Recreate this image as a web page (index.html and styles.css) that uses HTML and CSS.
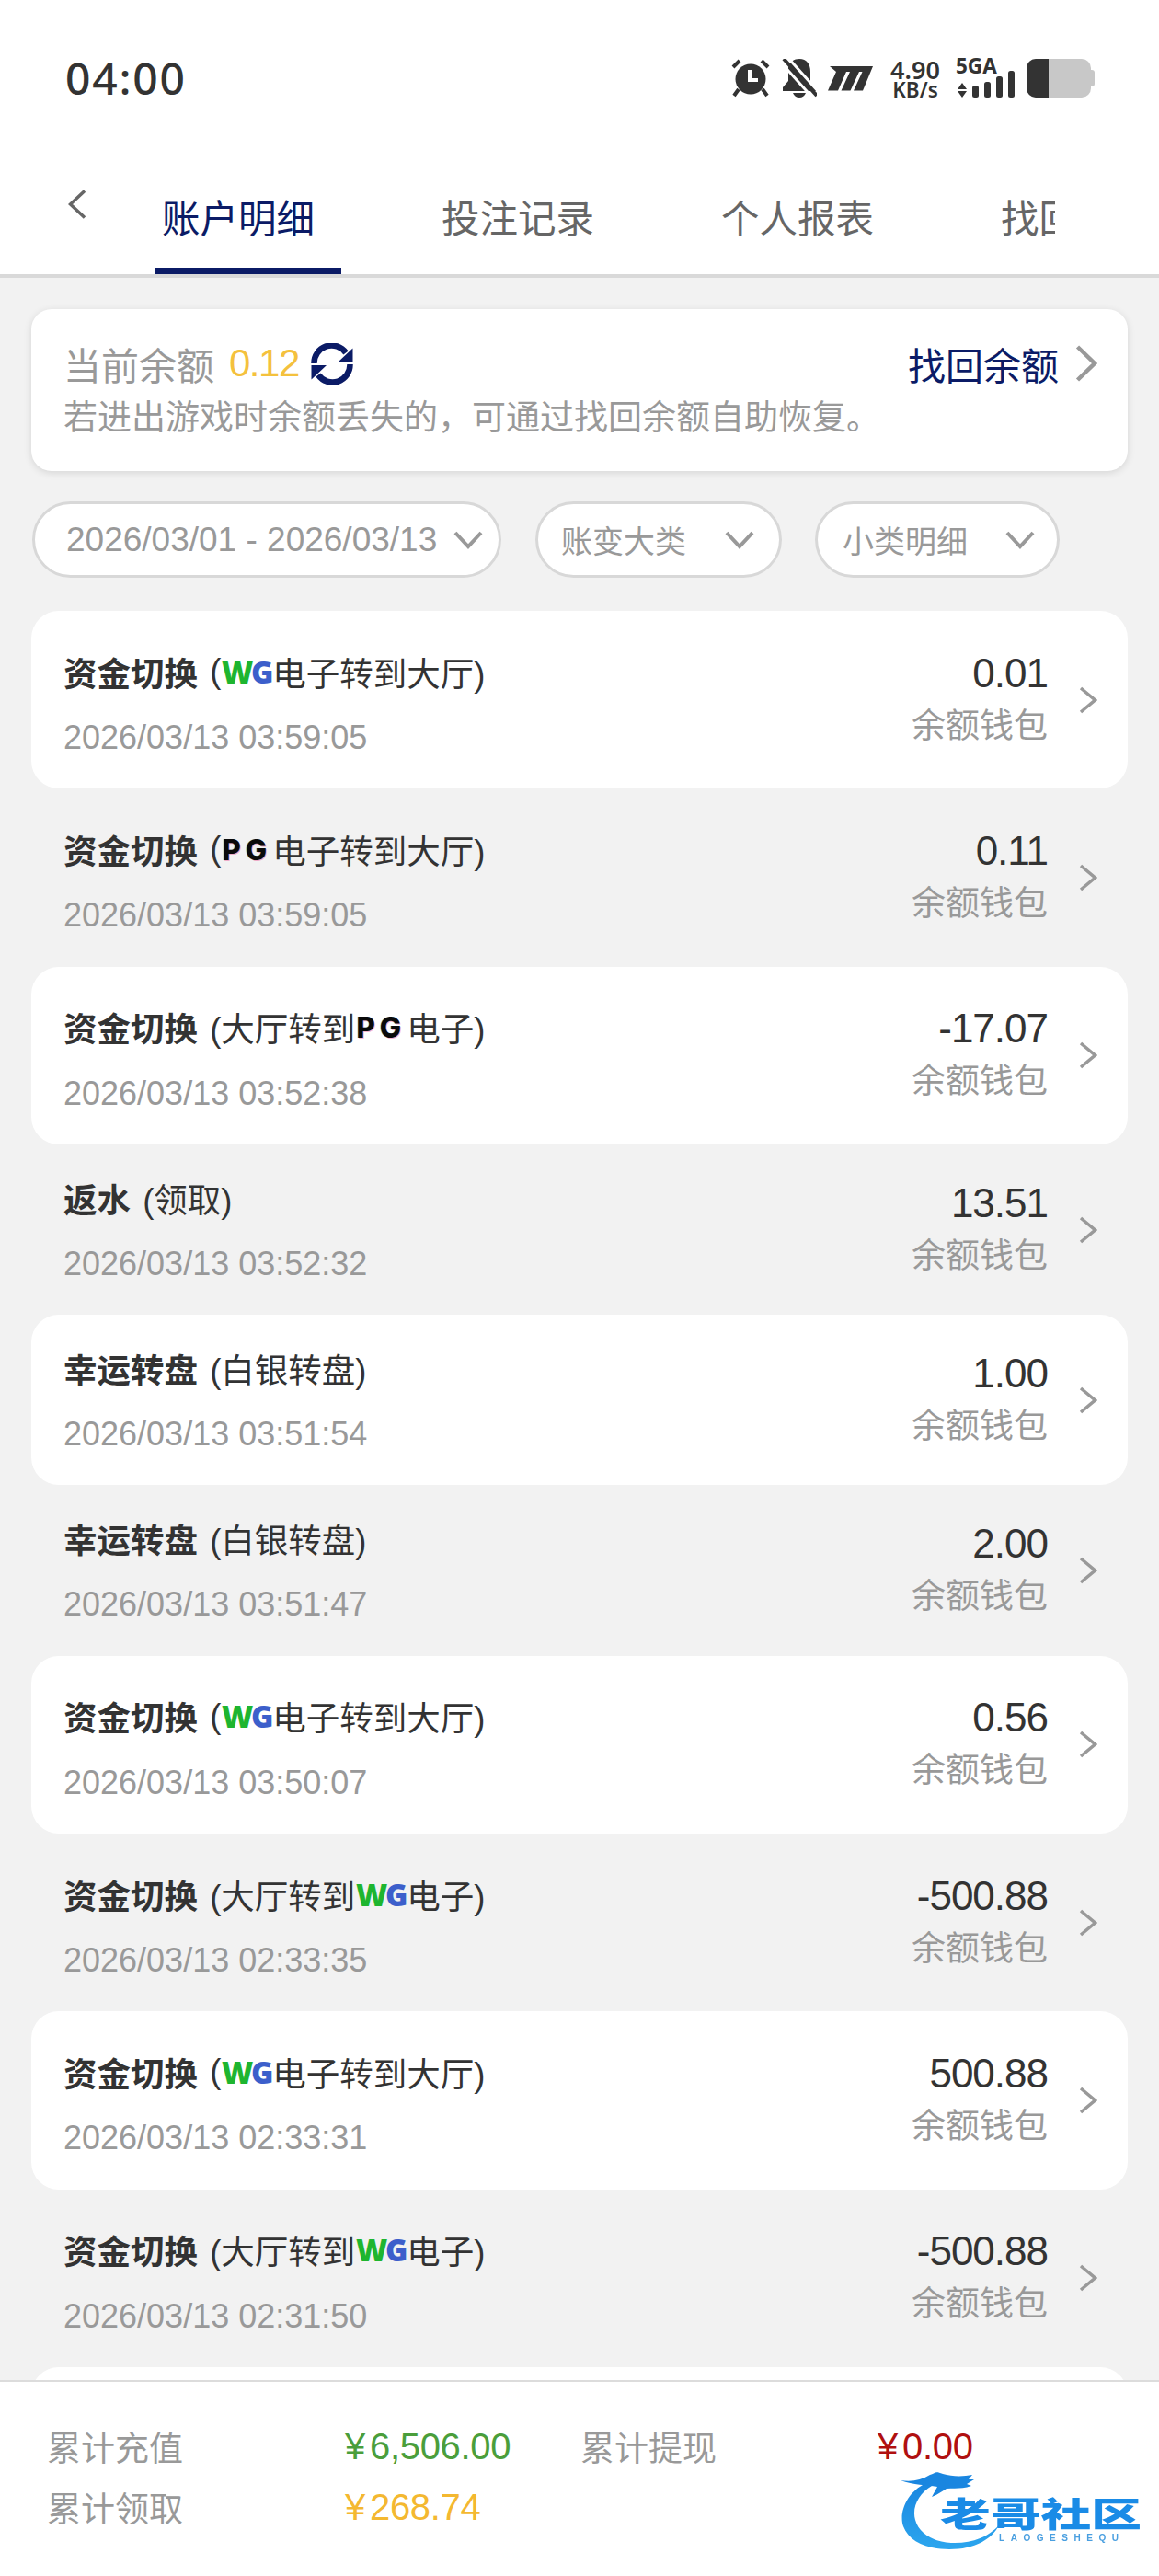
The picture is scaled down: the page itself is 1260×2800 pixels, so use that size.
FILE: index.html
```html
<!DOCTYPE html>
<html lang="zh-CN">
<head>
<meta charset="utf-8">
<title>账户明细</title>
<link rel="stylesheet" href="styles.css">
</head>
<body>
<div class="app">
  <div class="status">
    <span class="time">04:00</span>
    <div class="status-icons">
      <svg class="si-alarm" width="42" height="42" viewBox="0 0 42 42"><path d="M2 9 9 2M40 9 33 2M8 33 3 40M34 33l5 7" stroke="#333" stroke-width="4" fill="none"/><circle cx="21" cy="22" r="16.500" fill="#333"/><path d="M20 12v11h9" stroke="#fff" stroke-width="4" fill="none"/></svg>
      <svg class="si-bell" width="38" height="42" viewBox="0 0 38 42"><path d="M7 9c2-6 6-9 12-9 8 0 12 6 12 14v11l6 7v3H1v-4l6-7z" fill="#333"/><path d="M12 37h14c-1 3-4 5-7 5s-6-2-7-5z" fill="#333"/><path d="M-1 4 35 44" stroke="#fff" stroke-width="3"/><path d="M2 0 38 40" stroke="#333" stroke-width="4"/><path d="M5 -3 41 37" stroke="#fff" stroke-width="3"/></svg>
      <svg class="si-m" width="49" height="28" viewBox="0 0 49 28"><path d="M2 1h47L38 27.500H28L37.500 7H34L24.500 27.500H14.500L24 7H20L11 27.500H0L9 7z" fill="#333"/></svg>
      <div class="net"><span class="net-a">4.90</span><span class="net-b">KB/s</span></div>
      <svg class="si-signal" width="64" height="42" viewBox="0 0 64 42"><text x="0" y="16" class="fiveg">5GA</text><path d="M7 26l5 7H2zM7 42l5-7H2z" fill="#333"/><rect x="18" y="29" width="7" height="13" rx="2.500" fill="#333"/><rect x="31" y="25" width="7" height="17" rx="2.500" fill="#333"/><rect x="44" y="19" width="7" height="23" rx="2.500" fill="#333"/><rect x="57" y="13" width="7" height="29" rx="2.500" fill="#333"/></svg>
      <div class="battery"><div class="battery-body"><div class="battery-level"></div></div><div class="battery-tip"></div></div>
    </div>
  </div>

  <div class="topbar">
    <svg class="back" width="20" height="32" viewBox="0 0 20 32"><path d="M18 1.500 2.500 16 18 30.500" fill="none" stroke="#666" stroke-width="3.500"/></svg>
    <div class="tabs">
      <div class="tab active"><span>账户明细</span></div>
      <div class="tab"><span>投注记录</span></div>
      <div class="tab"><span>个人报表</span></div>
      <div class="tab"><span>找回余额</span></div>
    </div>
  </div>

  <div class="content">
    <div class="balance">
      <div class="balance-top">
        <div class="balance-left">
          <span class="b-label">当前余额</span>
          <span class="b-value">0.12</span>
          <svg class="refresh" width="46" height="45" viewBox="0 0 46 45"><path d="M3.500 22A19 19 0 0 1 38 10.500" fill="none" stroke="#0b1b66" stroke-width="6.500"/><path d="M45.500 5.500V21H29z" fill="#0b1b66"/><path d="M42.500 23A19 19 0 0 1 8 34.500" fill="none" stroke="#0b1b66" stroke-width="6.500"/><path d="M.5 39.500V24H17z" fill="#0b1b66"/></svg>
        </div>
        <div class="balance-right">
          <span class="b-link">找回余额</span>
          <svg class="chev-big" width="24" height="40" viewBox="0 0 24 40"><path d="M2.500 2 21 20 2.500 38" fill="none" stroke="#999" stroke-width="4.500"/></svg>
        </div>
      </div>
      <div class="b-note">若进出游戏时余额丢失的，可通过找回余额自助恢复。</div>
    </div>

    <div class="filters">
      <div class="pill pill-date"><span class="date-text">2026/03/01 - 2026/03/13</span><svg width="32" height="20" viewBox="0 0 32 20"><path d="M2 2 16 17 30 2" fill="none" stroke="#999" stroke-width="4"/></svg></div>
      <div class="pill pill-major"><span>账变大类</span><svg width="32" height="20" viewBox="0 0 32 20"><path d="M2 2 16 17 30 2" fill="none" stroke="#999" stroke-width="4"/></svg></div>
      <div class="pill pill-minor"><span>小类明细</span><svg width="32" height="20" viewBox="0 0 32 20"><path d="M2 2 16 17 30 2" fill="none" stroke="#999" stroke-width="4"/></svg></div>
    </div>

    <div class="list">
      <div class="row white logo-row"><div class="row-main"><div class="title"><b>资金切换</b> (<span class="wg"><i>W</i><em>G</em></span>电子转到大厅)</div><div class="when">2026/03/13 03:59:05</div></div><div class="row-side"><div class="amount">0.01</div><div class="wallet">余额钱包</div></div><svg class="chev" width="20" height="30" viewBox="0 0 20 30"><path d="M2 2 17.500 15 2 28" fill="none" stroke="#999" stroke-width="3.500"/></svg></div>
      <div class="row logo-row"><div class="row-main"><div class="title"><b>资金切换</b> (<span class="pg">PG</span>电子转到大厅)</div><div class="when">2026/03/13 03:59:05</div></div><div class="row-side"><div class="amount">0.11</div><div class="wallet">余额钱包</div></div><svg class="chev" width="20" height="30" viewBox="0 0 20 30"><path d="M2 2 17.500 15 2 28" fill="none" stroke="#999" stroke-width="3.500"/></svg></div>
      <div class="row white logo-row"><div class="row-main"><div class="title"><b>资金切换</b> (大厅转到<span class="pg">PG</span>电子)</div><div class="when">2026/03/13 03:52:38</div></div><div class="row-side"><div class="amount">-17.07</div><div class="wallet">余额钱包</div></div><svg class="chev" width="20" height="30" viewBox="0 0 20 30"><path d="M2 2 17.500 15 2 28" fill="none" stroke="#999" stroke-width="3.500"/></svg></div>
      <div class="row"><div class="row-main"><div class="title"><b>返水</b> (领取)</div><div class="when">2026/03/13 03:52:32</div></div><div class="row-side"><div class="amount">13.51</div><div class="wallet">余额钱包</div></div><svg class="chev" width="20" height="30" viewBox="0 0 20 30"><path d="M2 2 17.500 15 2 28" fill="none" stroke="#999" stroke-width="3.500"/></svg></div>
      <div class="row white"><div class="row-main"><div class="title"><b>幸运转盘</b> (白银转盘)</div><div class="when">2026/03/13 03:51:54</div></div><div class="row-side"><div class="amount">1.00</div><div class="wallet">余额钱包</div></div><svg class="chev" width="20" height="30" viewBox="0 0 20 30"><path d="M2 2 17.500 15 2 28" fill="none" stroke="#999" stroke-width="3.500"/></svg></div>
      <div class="row"><div class="row-main"><div class="title"><b>幸运转盘</b> (白银转盘)</div><div class="when">2026/03/13 03:51:47</div></div><div class="row-side"><div class="amount">2.00</div><div class="wallet">余额钱包</div></div><svg class="chev" width="20" height="30" viewBox="0 0 20 30"><path d="M2 2 17.500 15 2 28" fill="none" stroke="#999" stroke-width="3.500"/></svg></div>
      <div class="row white logo-row"><div class="row-main"><div class="title"><b>资金切换</b> (<span class="wg"><i>W</i><em>G</em></span>电子转到大厅)</div><div class="when">2026/03/13 03:50:07</div></div><div class="row-side"><div class="amount">0.56</div><div class="wallet">余额钱包</div></div><svg class="chev" width="20" height="30" viewBox="0 0 20 30"><path d="M2 2 17.500 15 2 28" fill="none" stroke="#999" stroke-width="3.500"/></svg></div>
      <div class="row logo-row"><div class="row-main"><div class="title"><b>资金切换</b> (大厅转到<span class="wg"><i>W</i><em>G</em></span>电子)</div><div class="when">2026/03/13 02:33:35</div></div><div class="row-side"><div class="amount">-500.88</div><div class="wallet">余额钱包</div></div><svg class="chev" width="20" height="30" viewBox="0 0 20 30"><path d="M2 2 17.500 15 2 28" fill="none" stroke="#999" stroke-width="3.500"/></svg></div>
      <div class="row white logo-row"><div class="row-main"><div class="title"><b>资金切换</b> (<span class="wg"><i>W</i><em>G</em></span>电子转到大厅)</div><div class="when">2026/03/13 02:33:31</div></div><div class="row-side"><div class="amount">500.88</div><div class="wallet">余额钱包</div></div><svg class="chev" width="20" height="30" viewBox="0 0 20 30"><path d="M2 2 17.500 15 2 28" fill="none" stroke="#999" stroke-width="3.500"/></svg></div>
      <div class="row logo-row"><div class="row-main"><div class="title"><b>资金切换</b> (大厅转到<span class="wg"><i>W</i><em>G</em></span>电子)</div><div class="when">2026/03/13 02:31:50</div></div><div class="row-side"><div class="amount">-500.88</div><div class="wallet">余额钱包</div></div><svg class="chev" width="20" height="30" viewBox="0 0 20 30"><path d="M2 2 17.500 15 2 28" fill="none" stroke="#999" stroke-width="3.500"/></svg></div>
      <div class="row white"></div>
    </div>
  </div>

  <div class="footer">
    <span class="f-label">累计充值</span><span class="f-val green"><small>¥</small>6,506.00</span>
    <span class="f-label">累计提现</span><span class="f-val red"><small>¥</small>0.00</span>
    <span class="f-label">累计领取</span><span class="f-val yellow"><small>¥</small>268.74</span>
    <svg class="watermark" width="262" height="90" viewBox="0 0 262 90">
      <defs><linearGradient id="wm" x1="0" y1="0" x2="0" y2="1"><stop offset="0" stop-color="#1a86e0"/><stop offset="1" stop-color="#2ca6ee"/></linearGradient></defs>
      <path d="M28 15C6 25-2 48 3 62c6 16 24 25 50 25 28 0 46-11 54-26-12 13-30 20-52 19C36 79 20 70 16 55 12 41 20 26 34 18z" fill="url(#wm)"/>
      <path d="M0 12c12 2 22 0 32-6 8-3 6-4 14-1 10 3 22 3 32 1l-4 5 6 0-8 5 5 2c-10 4-18 2-27 3-5 3-10 7-16 9l6-11C28 17 14 17 0 12z" fill="#1a86e0"/>
      <text class="wm-cn" transform="translate(43 63) scale(1.48 1)">老哥社区</text>
      <text class="wm-en" x="107" y="78" textLength="130">LAOGESHEQU</text>
    </svg>
  </div>
</div>
</body>
</html>
```
FILE: styles.css
```css
* { box-sizing: border-box; }
html, body { margin: 0; padding: 0; }
body {
  width: 1260px;
  height: 2800px;
  overflow: hidden;
  background: #fff;
  color: #333;
  font-family: "Liberation Sans", "Noto Sans CJK SC", sans-serif;
}
.app { display: flex; flex-direction: column; height: 2800px; }

/* status bar */
.status {
  flex: none;
  height: 180px;
  padding: 64px 70px 0 71px;
  display: flex;
  justify-content: space-between;
  align-items: flex-start;
}
.time {
  font-family: "Noto Sans", sans-serif;
  font-size: 48px;
  font-weight: 500;
  line-height: 42px;
  letter-spacing: 1.8px;
  color: #333;
}
.status-icons { display: flex; align-items: flex-start; }
.si-alarm { margin-right: 13px; }
.si-bell { margin-right: 12px; overflow: hidden; }
.si-m { margin-top: 7px; margin-right: 20px; }
.si-signal { margin-right: 13px; overflow: visible; }
.net {
  width: 52px;
  margin-right: 18px;
  display: flex;
  flex-direction: column;
  align-items: center;
  font-family: "Noto Sans", sans-serif;
  font-weight: 600;
  color: #333;
}
.net-a { font-size: 27px; line-height: 24px; }
.net-b { font-size: 22.500px; line-height: 19px; }
.fiveg { font-family: "Noto Sans", sans-serif; font-size: 22.500px; font-weight: 700; fill: #333; }
.battery { display: flex; align-items: center; width: 74px; height: 42px; }
.battery-body { width: 70px; height: 42px; background: #c8c8c8; border-radius: 10px; overflow: hidden; }
.battery-level { width: 24px; height: 100%; background: #333; }
.battery-tip { width: 4px; height: 18px; background: #c8c8c8; border-radius: 0 3px 3px 0; }

/* tabs */
.topbar {
  flex: none;
  height: 124px;
  margin-top: -2px;
  position: relative;
  border-bottom: 4px solid #d9d9d9;
  display: flex;
  padding-left: 168px;
}
.back { position: absolute; left: 74px; top: 28px; }
.tabs { width: 979px; height: 120px; display: flex; overflow: hidden; }
.tab { flex: none; width: 304px; }
.tab span {
  display: block;
  width: 203px;
  height: 120px;
  padding: 31px 0 0 8px;
  font-size: 41.500px;
  line-height: 60px;
  color: #666;
  white-space: nowrap;
}
.tab.active span { color: #0b1b66; border-bottom: 7px solid #0b1b66; }

/* content */
.content {
  flex: 1;
  min-height: 0;
  overflow: hidden;
  background: #f2f2f2;
  padding: 34px 34px 0;
}
.balance {
  height: 176px;
  background: #fff;
  border-radius: 22px;
  box-shadow: 0 2px 8px rgba(0,0,0,.12);
  padding: 34px 34px 0 35px;
}
.balance-top { display: flex; justify-content: space-between; align-items: center; height: 50px; }
.balance-left { display: flex; align-items: center; }
.b-label { font-size: 41px; color: #999; }
.b-value { font-size: 42px; letter-spacing: -1.5px; color: #f4c13d; margin-left: 16px; }
.refresh { margin-left: 13px; }
.balance-right { display: flex; align-items: center; }
.b-link { font-size: 41px; color: #0b1b66; }
.chev-big { margin-left: 18px; margin-right: -1px; }
.b-note { margin-top: 9px; font-size: 37px; line-height: 52px; color: #999; white-space: nowrap; }

.filters { display: flex; margin-top: 33px; padding-left: 1px; }
.pill {
  height: 83px;
  background: #fff;
  border: 3.5px solid #d8d8d8;
  border-radius: 42px;
  display: flex;
  align-items: center;
  justify-content: space-between;
  color: #999;
  font-size: 34px;
  white-space: nowrap;
}
.pill-date { width: 510px; padding: 0 17px 0 34px; font-size: 37px; }
.pill-major { width: 268px; margin-left: 37px; padding: 0 27px 0 25px; }
.pill-minor { width: 266px; margin-left: 36px; padding: 0 24px 0 27px; }

.list { margin-top: 36px; }
.row {
  height: 185.300px;
  padding: 25px 33px 0 35px;
  border-radius: 30px;
  display: flex;
  align-items: center;
}
.row.white { background: #fff; }
.row.logo-row { height: 193.300px; }
.row-main { flex: 1; min-width: 0; align-self: flex-start; }
.title {
  height: 70px;
  padding-bottom: 3px;
  display: flex;
  align-items: center;
  font-size: 36.500px;
  color: #333;
  white-space: pre;
}
.title b { font-weight: 700; margin-right: 3px; }
.logo-row .title { height: 78px; padding-top: 5px; padding-bottom: 1px; }
.when { height: 70px; font-size: 36px; line-height: 70px; color: #999; }
.wg, .pg {
  display: inline-block;
  width: 56px;
  text-align: center;
  white-space: nowrap;
}
.wg { font-family: "Noto Sans", sans-serif; font-weight: 900; font-size: 33px; letter-spacing: -2px; }
.wg i { font-style: normal; color: #1eb52f; }
.wg em { font-style: normal; color: #3c5fcb; }
.pg {
  font-family: "Inter", sans-serif;
  font-weight: 800;
  font-size: 31px;
  letter-spacing: 5px;
  color: #0a0a0a;
  text-shadow: 1px 1px 0 rgba(230,40,120,.35), -1px 0 0 rgba(40,200,230,.35);
}
.row-side { margin-top: -25px; text-align: right; }
.amount { font-size: 44px; letter-spacing: -1px; line-height: 58px; color: #333; }
.wallet { font-size: 37px; line-height: 58px; color: #999; }
.chev { margin: -25px 0 0 34px; flex: none; }

/* footer */
.footer {
  flex: none;
  height: 213px;
  background: #fff;
  border-top: 2px solid #dcdcdc;
  padding: 37px 0 0 51px;
  display: grid;
  grid-template-columns: 324px 256px 323px 1fr;
  grid-auto-rows: 66px;
  align-items: center;
  position: relative;
}
.f-label { font-size: 37px; color: #999; }
.f-val { font-size: 40px; letter-spacing: -.3px; white-space: nowrap; }
.f-val small { font-size: 40px; margin-right: 5px; }
.green { color: #4a9e3b; }
.red { color: #b01010; }
.yellow { color: #f4b830; }
.watermark { position: absolute; left: 979px; top: 95px; overflow: visible; filter: blur(.6px); }
.wm-cn { font-family: "Noto Sans CJK SC", sans-serif; font-weight: 900; font-size: 37px; fill: #1a8be6; }
.wm-en { font-family: "Liberation Sans", sans-serif; font-size: 10px; font-weight: 700; fill: #4a9fe0; }
```
